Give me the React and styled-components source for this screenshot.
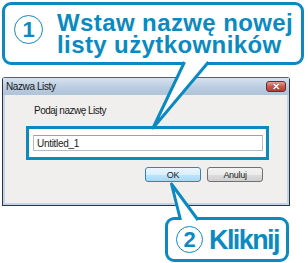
import React from "react";
import styled, { createGlobalStyle } from "styled-components";

const BLUE = "#0b8ac2";

const GlobalStyle = createGlobalStyle`
  html, body {
    margin: 0;
    padding: 0;
    background: #ffffff;
  }
  body {
    width: 308px;
    height: 263px;
    overflow: hidden;
  }
`;

const Page = styled.div`
  position: relative;
  width: 308px;
  height: 263px;
  padding: 2px 0 0 2px;
  box-sizing: border-box;
  display: flex;
  flex-direction: column;
  font-family: "Liberation Sans", Arial, sans-serif;
`;

const Bubble = styled.div`
  box-sizing: border-box;
  border: 3px solid ${BLUE};
  border-radius: 9px;
  background: #fff;
  display: flex;
  align-items: ${(p) => (p.$center ? "center" : "flex-start")};
  color: ${BLUE};
  font-weight: bold;
`;

const TopBubble = styled(Bubble)`
  width: 302px;
  height: 63px;
  padding: 7px 0 0 9px;
`;

const BottomBubble = styled(Bubble)`
  align-self: flex-end;
  margin: 11px 19px 0 0;
  width: 124px;
  height: 45px;
  padding: 0 0 0 8px;
`;

const Circled = styled.span`
  box-sizing: border-box;
  flex: none;
  width: ${(p) => p.$size}px;
  height: ${(p) => p.$size}px;
  border: 1.6px solid ${BLUE};
  border-radius: 50%;
  display: flex;
  align-items: center;
  justify-content: center;
  font-size: ${(p) => p.$font}px;
  font-weight: bold;
  line-height: 1;
  margin-top: ${(p) => p.$top || 0}px;
`;

const Headline = styled.div`
  margin-left: 14px;
  font-size: 24px;
  line-height: 22px;
  letter-spacing: 0.4px;
`;

const Action = styled.span`
  margin-left: 6px;
  font-size: 28px;
  line-height: 30px;
  letter-spacing: -1.6px;
  transform: scaleX(0.96);
  transform-origin: left center;
`;

const Window = styled.div`
  margin-top: 12px;
  width: 288px;
  height: 129px;
  box-sizing: border-box;
  border: 1px solid #2b3440;
  border-top-color: #56606c;
  border-radius: 3px 3px 0 0;
  background: #c2d3e6;
  display: flex;
  flex-direction: column;
  font-family: "Liberation Sans", Arial, sans-serif;
  font-size: 10px;
  color: #1a1a1a;
`;

const TitleBar = styled.div`
  height: 17px;
  flex: none;
  display: flex;
  align-items: center;
  justify-content: space-between;
  padding: 0 3px 0 3px;
  background: linear-gradient(#d6e2ef, #b9cbdf 60%, #afc3d9);
  letter-spacing: -0.4px;
`;

const CloseButton = styled.div`
  width: 20px;
  height: 11px;
  box-sizing: border-box;
  border: 1px solid #6b2a2a;
  border-radius: 3px;
  background: linear-gradient(#e5a094, #c75a4c 50%, #b23d30);
  display: flex;
  align-items: center;
  justify-content: center;
  color: #fff;
  font-size: 10px;
  font-weight: bold;
  line-height: 1;
  text-shadow: 0 0 1px #3a0d0d;
`;

const Body = styled.div`
  flex: 1;
  margin: 0 2px 2px 2px;
  background: #f0efed;
  display: flex;
  flex-direction: column;
  padding: 10px 0 0 21px;
`;

const Label = styled.div`
  margin-left: 8px;
  letter-spacing: -0.5px;
  line-height: 12px;
`;

const Highlight = styled.div`
  margin-top: 9px;
  width: 243px;
  height: 34px;
  box-sizing: border-box;
  border: 3px solid ${BLUE};
  background: #fff;
  padding: 6px 0 0 4px;
`;

const Field = styled.div`
  width: 230px;
  height: 16px;
  box-sizing: border-box;
  border: 1px solid #b5bcc6;
  border-top-color: #99a1ab;
  background: #fff;
  padding: 0 0 0 3px;
  display: flex;
  align-items: center;
  letter-spacing: -0.3px;
`;

const ButtonRow = styled.div`
  margin-top: 7px;
  width: 237px;
  display: flex;
  justify-content: flex-end;
  gap: 6px;
`;

const Button = styled.div`
  width: 56px;
  height: 15px;
  box-sizing: border-box;
  border: 1px solid ${(p) => (p.$focus ? "#3c7fb1" : "#707070")};
  border-radius: 3px;
  background: ${(p) =>
    p.$focus
      ? "linear-gradient(#eaf6fd, #d9f0fc 50%, #bee6fd 51%, #a7d9f5)"
      : "linear-gradient(#f2f2f2, #ebebeb 50%, #dddddd 51%, #cfcfcf)"};
  display: flex;
  align-items: center;
  justify-content: center;
  letter-spacing: -0.3px;
  font-size: 9px;
`;

const Overlay = styled.svg`
  position: absolute;
  left: 0;
  top: 0;
  pointer-events: none;
`;

export default function App() {
  return (
    <>
      <GlobalStyle />
      <Page>
        <TopBubble>
          <Circled $size={29} $font={22} $top={3}>
            1
          </Circled>
          <Headline>
            Wstaw nazwę nowej
            <br />
            listy użytkowników
          </Headline>
        </TopBubble>

        <Window>
          <TitleBar>
            <span>Nazwa Listy</span>
            <CloseButton>✕</CloseButton>
          </TitleBar>
          <Body>
            <Label>Podaj nazwę Listy</Label>
            <Highlight>
              <Field>Untitled_1</Field>
            </Highlight>
            <ButtonRow>
              <Button $focus>OK</Button>
              <Button>Anuluj</Button>
            </ButtonRow>
          </Body>
        </Window>

        <BottomBubble $center>
          <Circled $size={27} $font={22}>
            2
          </Circled>
          <Action>Kliknij</Action>
        </BottomBubble>

        <Overlay width="308" height="263" viewBox="0 0 308 263">
          <polyline
            points="184.5,62 153,128 208.5,62"
            fill="#fff"
            stroke={BLUE}
            strokeWidth="3"
            strokeLinejoin="round"
          />
          <polyline
            points="180.5,220 171.5,184 198,220"
            fill="#fff"
            stroke={BLUE}
            strokeWidth="3"
            strokeLinejoin="round"
          />
        </Overlay>
      </Page>
    </>
  );
}
